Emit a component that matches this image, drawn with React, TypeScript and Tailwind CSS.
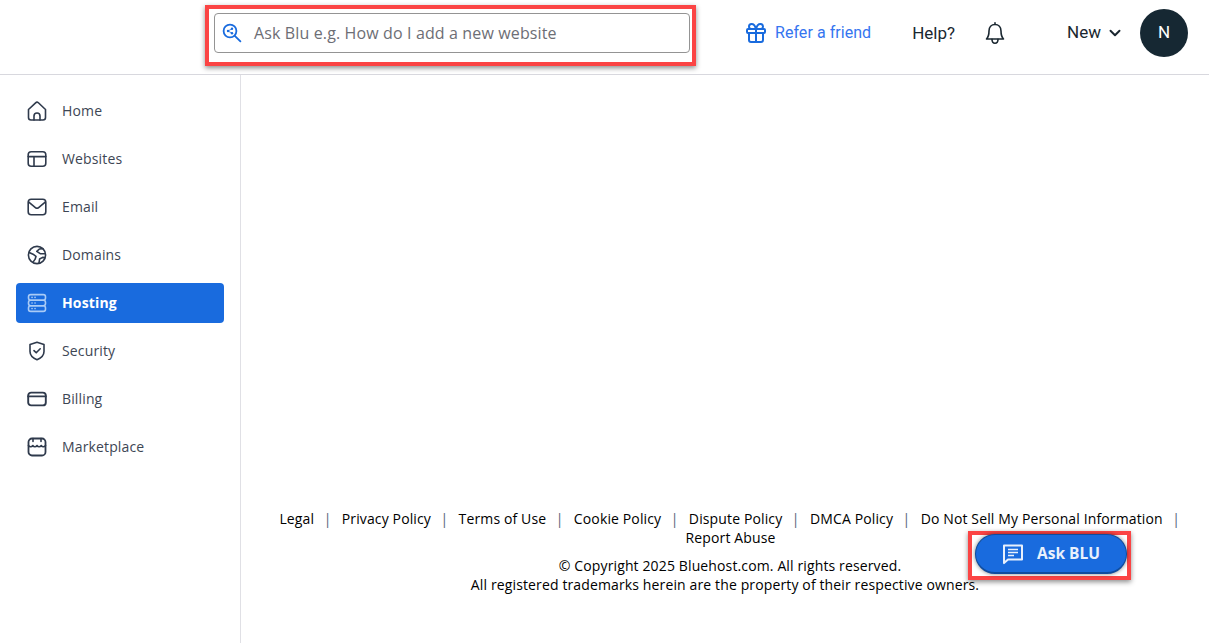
import { ChevronDown, Gift } from "lucide-react";
import type { ReactNode } from "react";

const stroke = {
  fill: "none",
  stroke: "currentColor",
  strokeWidth: 1.6,
  strokeLinecap: "round" as const,
  strokeLinejoin: "round" as const,
};

function Icon({ children }: { children: ReactNode }) {
  return (
    <svg viewBox="0 0 20 20" className="h-5 w-5 shrink-0" {...stroke}>
      {children}
    </svg>
  );
}

const navItems: { label: string; icon: ReactNode; active?: boolean }[] = [
  {
    label: "Home",
    icon: (
      <Icon>
        <path d="M1.5 8.5 8.6 1.8a2 2 0 0 1 2.8 0l7.1 6.7v8a2.5 2.5 0 0 1-2.5 2.5H4a2.5 2.5 0 0 1-2.5-2.5z" />
        <path d="M7 19v-4a3 3 0 0 1 6 0v4" />
      </Icon>
    ),
  },
  {
    label: "Websites",
    icon: (
      <Icon>
        <rect x="1.2" y="2.8" width="17.6" height="14.4" rx="3" />
        <path d="M1.2 7.6h17.6M7 7.6v9.6" />
      </Icon>
    ),
  },
  {
    label: "Email",
    icon: (
      <Icon>
        <rect x="1.2" y="2.2" width="17.6" height="15.6" rx="3" />
        <path d="m1.8 5.2 6.6 5.4a2.5 2.5 0 0 0 3.2 0l6.6-5.4" />
      </Icon>
    ),
  },
  {
    label: "Domains",
    icon: (
      <Icon>
        <circle cx="10" cy="10" r="8.6" />
        <path d="M2.2 7.5 6 9.2l3 2.2-1 3-1.6 2.2M15.8 3.6 12.4 4l-2.6 2.4 3.4 2.2 4.4.2M12 17.8l.6-3.8 3-1.6 2 .2" />
      </Icon>
    ),
  },
  {
    label: "Hosting",
    active: true,
    icon: (
      <Icon>
        <rect x="1.5" y="1.6" width="17" height="5.6" rx="2.2" />
        <rect x="1.5" y="7.2" width="17" height="5.6" rx="2.2" />
        <rect x="1.5" y="12.8" width="17" height="5.6" rx="2.2" />
        <path d="M5 4.4h.1M8 4.4h.1M5 10h.1M8 10h.1M5 15.6h.1M8 15.6h.1" />
      </Icon>
    ),
  },
  {
    label: "Security",
    icon: (
      <Icon>
        <path d="M10 1.2 17 3.6v7c0 3.8-3 6.6-7 8.2-4-1.6-7-4.4-7-8.2v-7z" />
        <path d="m7 9.6 2.2 2.2L13.2 7.8" />
      </Icon>
    ),
  },
  {
    label: "Billing",
    icon: (
      <Icon>
        <rect x="1.2" y="3.6" width="17.6" height="12.8" rx="3" strokeWidth={1.9} />
        <path d="M1.2 7.4h17.6" strokeWidth={1.9} />
      </Icon>
    ),
  },
  {
    label: "Marketplace",
    icon: (
      <Icon>
        <rect x="1.5" y="1.5" width="17" height="17" rx="3.5" strokeWidth={1.8} />
        <path d="M1.5 8.5c1.2 1.6 3.2 1.6 4.3 0 1.1 1.6 3.1 1.6 4.2 0 1.1 1.6 3.1 1.6 4.2 0 1.1 1.6 3.1 1.6 4.3 0M6 1.5v3M14 1.5v3" strokeWidth={1.6} />
      </Icon>
    ),
  },
];

const footerLinks = [
  "Legal",
  "Privacy Policy",
  "Terms of Use",
  "Cookie Policy",
  "Dispute Policy",
  "DMCA Policy",
  "Do Not Sell My Personal Information",
];

export default function App() {
  return (
    <div className="relative flex h-[643px] w-[1209px] flex-col overflow-hidden bg-white font-['Open_Sans',sans-serif]">
      {/* Header */}
      <header className="flex h-[75px] shrink-0 items-center border-b border-[#d8d8de] pb-2 pl-[205px]">
        <div className="mt-[5px] h-[61px] w-[491px] shrink-0 border-4 border-[#fb4444] bg-white pl-[5px] pr-[2px] pt-1 shadow-[0_2px_5px_rgba(0,0,0,0.45)]">
          <div className="flex h-10 items-center rounded border border-[#949494] pl-[7px]">
            <svg viewBox="0 0 20 20" className="h-5 w-5 text-[#196bde]" {...stroke} strokeWidth={1.8}>
              <circle cx="8" cy="8" r="6.4" />
              <path d="m12.8 12.8 5.6 5.6" />
              <circle cx="6" cy="8" r="1.2" fill="currentColor" stroke="none" />
              <circle cx="10" cy="5.8" r="1.2" fill="currentColor" stroke="none" />
              <circle cx="10" cy="10.2" r="1.2" fill="currentColor" stroke="none" />
              <path d="M6 8l4-2.2M6 8l4 2.2" strokeWidth={0.8} />
            </svg>
            <span className="ml-[12px] text-base tracking-[0.13px] text-[#6d6e75]">
              Ask Blu e.g. How do I add a new website
            </span>
          </div>
        </div>
        <div className="ml-[48px] flex items-center gap-[7px] font-['Roboto',sans-serif] text-base tracking-[0.05px] text-[#3575f0]">
          <Gift className="h-6 w-6 text-[#196bde]" strokeWidth={2} />
          <span>Refer a friend</span>
        </div>
        <span className="ml-[41px] mt-[1px] font-['Roboto',sans-serif] text-[17px] text-[#1a2730]">Help?</span>
        <svg viewBox="0 0 24 24" className="ml-[28px] h-6 w-6 text-[#1a2730]" {...stroke}>
          <path d="M12 3.5c-3.6 0-6 2.8-6 6.5 0 4.5-1 6.5-2.5 8h17c-1.5-1.5-2.5-3.5-2.5-8 0-3.7-2.4-6.5-6-6.5zM12 3.5V1.8" />
          <path d="M9 18.2c0 2.6 1.3 4 3 4s3-1.4 3-4" />
        </svg>
        <span className="ml-[60px] font-['Roboto',sans-serif] text-[17px] text-[#1a2730]">New</span>
        <ChevronDown className="ml-[5px] h-[18px] w-[18px] text-[#1a2730]" strokeWidth={2.6} />
        <div className="ml-[16px] flex h-12 w-12 items-center justify-center rounded-full bg-[#162833] font-['Roboto',sans-serif] text-[17px] text-white">
          N
        </div>
      </header>

      <div className="flex min-h-0 flex-1">
        {/* Sidebar */}
        <nav className="flex w-[241px] shrink-0 flex-col gap-2 border-r border-[#e0e0e5] px-4 pt-4">
          {navItems.map((item) => (
            <div
              key={item.label}
              className={`flex h-10 w-[208px] items-center gap-[15px] rounded pl-[11px] text-sm tracking-[0.14px] ${
                item.active ? "bg-[#196bde] font-bold text-white" : "text-[#3d4654]"
              }`}
            >
              <span className={item.active ? "text-[#a9cbf6]" : "text-[#2f3a4c]"}>{item.icon}</span>
              {item.label}
            </div>
          ))}
        </nav>

        {/* Footer sits at the bottom of the empty content area */}
        <main className="flex min-w-0 flex-1 flex-col justify-end pb-[49px] text-center text-sm tracking-[0.13px] text-black">
          <div className="pl-[16px] leading-[19px]">
            {footerLinks.map((link) => (
              <span key={link}>
                <span className="whitespace-nowrap">{link}</span>
                <span className="ml-[9.5px] mr-[6.5px] text-[#53627a]">|</span>{" "}
              </span>
            ))}
            <span className="mr-[5px] whitespace-nowrap">Report Abuse</span>
          </div>
          <p className="mt-[9px] pl-[10px] leading-[19px]">© Copyright 2025 Bluehost.com. All rights reserved.</p>
          <p className="leading-[19px]">All registered trademarks herein are the property of their respective owners.</p>
        </main>
      </div>

      {/* Ask BLU floating button */}
      <div className="absolute left-[968px] top-[531px] h-[49px] w-[163px] border-4 border-[#fb4444] bg-white shadow-[0_2px_5px_rgba(0,0,0,0.45)]">
        <button className="absolute left-[3px] top-[-1px] flex h-10 w-[152px] items-center justify-center gap-[12px] rounded-full border border-b-2 border-[#0f4c9e] bg-[#196bde] text-[15.5px] font-bold text-[#e8f0fc] shadow-[0_0_4px_rgba(0,0,0,0.5)]">
          <svg viewBox="0 0 24 24" className="-ml-[1px] h-[24px] w-[24px]" fill="none" stroke="currentColor" strokeWidth={2}>
            <path d="M3 3.5h18v14H7l-4 3.6z" strokeLinejoin="round" />
            <path d="M7 7.5h10M7 10.5h10M7 13.5h6" strokeWidth={1.6} />
          </svg>
          <span className="mt-[1px]">Ask BLU</span>
        </button>
      </div>
    </div>
  );
}
